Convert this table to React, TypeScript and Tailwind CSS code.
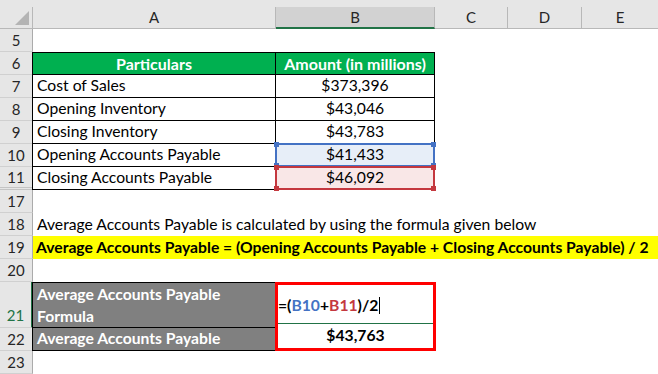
import React from "react";

const font = { fontFamily: "Lato, 'Open Sans', 'Liberation Sans', sans-serif" };

const rows = [
  { n: 7, label: "Cost of Sales", value: "$373,396" },
  { n: 8, label: "Opening Inventory", value: "$43,046" },
  { n: 9, label: "Closing Inventory", value: "$43,783" },
  { n: 10, label: "Opening Accounts Payable", value: "$41,433", mark: "blue" },
  { n: 11, label: "Closing Accounts Payable", value: "$46,092", mark: "red" },
];

function RowHead({ n, dark, double }: { n: number; dark?: boolean; double?: boolean }) {
  return (
    <div
      className={`w-[33px] shrink-0 bg-[#e6e6e6] border-r ${dark ? "border-r-black" : "border-r-[#ababab]"} ${
        double ? "border-b-[3px] border-b-[#c4c4c4] border-double" : "border-b border-b-[#d0d0d0]"
      } flex items-center justify-center text-[15px] text-[#262626]`}
    >
      {n}
    </div>
  );
}

function Corner({ color }: { color: string }) {
  return (
    <>
      <span className={`absolute left-[-3px] top-[-3px] w-[5px] h-[5px] ${color}`} />
      <span className={`absolute right-[-3px] top-[-3px] w-[5px] h-[5px] ${color}`} />
      <span className={`absolute left-[-3px] bottom-[-3px] w-[5px] h-[5px] ${color}`} />
      <span className={`absolute right-[-3px] bottom-[-3px] w-[5px] h-[5px] ${color}`} />
    </>
  );
}

export default function App() {
  return (
    <div className="w-[658px] h-[374px] overflow-hidden bg-white text-[15.7px] text-black" style={font}>
      {/* column headers */}
      <div className="h-[29px] bg-[#e6e6e6] flex flex-col">
        <div className="h-[7px]" />
        <div className="flex h-[22px] text-[15px] text-[#262626]">
          <div className="w-[33px] shrink-0 border-r border-b border-[#b8b8b8] flex items-end justify-end pr-[3px] pb-[3px]">
            <svg width="14" height="14" viewBox="0 0 14 14">
              <polygon points="0,14 14,14 14,0" fill="#b4b4b4" />
            </svg>
          </div>
          <div className="w-[243px] border-r border-b border-[#b8b8b8] flex items-center justify-center">A</div>
          <div className="w-[159px] bg-[#d2d2d2] border-r border-r-[#b8b8b8] border-b-2 border-b-[#217346] flex items-center justify-center">B</div>
          <div className="w-[73px] border-r border-b border-[#b8b8b8] flex items-center justify-center">C</div>
          <div className="w-[74px] border-r border-b border-[#b8b8b8] flex items-center justify-center">D</div>
          <div className="flex-1 border-b border-[#b8b8b8] flex items-center justify-center">E</div>
        </div>
      </div>

      {/* row 5 */}
      <div className="flex h-[23px]">
        <RowHead n={5} />
      </div>

      {/* row 6 header */}
      <div className="flex h-[23px]">
        <RowHead n={6} dark />
        <div className="-ml-px w-[244px] bg-[#00b050] border border-black flex items-center justify-center font-bold text-[16px] text-white">
          Particulars
        </div>
        <div className="w-[159px] bg-[#00b050] border-y border-r border-black flex items-center justify-center font-bold text-[16px] text-white">
          Amount (in millions)
        </div>
      </div>

      {rows.map((r) => (
        <div key={r.n} className="flex h-[23px]">
          <RowHead n={r.n} dark double={r.n === 11} />
          <div className="-ml-px w-[244px] border-x border-b border-black flex items-center pl-[4px]">{r.label}</div>
          <div className="relative w-[159px] border-r border-b border-black flex items-center justify-center">
            {r.mark === "blue" && (
              <div className="absolute left-[-1px] right-[-1px] top-[-1px] bottom-[-1px] border-2 border-[#4472c4] bg-[#e7eef8]">
                <Corner color="bg-[#4472c4]" />
              </div>
            )}
            {r.mark === "red" && (
              <div className="absolute left-[-1px] right-[-1px] top-[-1px] bottom-[-1px] border-2 border-[#c4383f] bg-[#f9e7e7]">
                <Corner color="bg-[#c4383f]" />
              </div>
            )}
            <span className="relative">{r.value}</span>
          </div>
        </div>
      ))}

      {/* row 17 */}
      <div className="flex h-[23px]">
        <RowHead n={17} />
      </div>

      {/* row 18 */}
      <div className="flex h-[23px]">
        <RowHead n={18} />
        <div className="flex items-center pl-[4px] whitespace-nowrap">
          Average Accounts Payable is calculated by using the formula given below
        </div>
      </div>

      {/* row 19 */}
      <div className="flex h-[23px]">
        <RowHead n={19} />
        <div className="flex-1 bg-[#ffff00] flex items-center pl-[3px] whitespace-nowrap font-bold">
          Average Accounts Payable = (Opening Accounts Payable + Closing Accounts Payable) / 2
        </div>
      </div>

      {/* row 20 */}
      <div className="flex h-[23px]">
        <RowHead n={20} />
      </div>

      {/* rows 21-22 */}
      <div className="flex h-[69px]">
        <div className="flex flex-col text-[15px]">
          <div className="w-[33px] h-[46px] bg-[#e6e6e6] border-r-2 border-r-[#217346] border-b border-b-[#d0d0d0] flex items-end justify-center text-[#217346]">
            <span className="h-[23px] leading-[23px]">21</span>
          </div>
          <div className="w-[33px] h-[23px] bg-[#e6e6e6] border-r border-r-black border-b border-b-[#d0d0d0] flex items-center justify-center text-[#262626]">
            22
          </div>
        </div>
        <div className="flex flex-col -ml-px">
          <div className="w-[244px] h-[46px] bg-[#808080] border border-black flex flex-col justify-end pl-[4px] font-bold text-white leading-[22px]">
            <span>Average Accounts Payable</span>
            <span>Formula</span>
          </div>
          <div className="w-[244px] h-[23px] bg-[#808080] border-x border-b border-black flex items-center pl-[4px] font-bold text-white">
            Average Accounts Payable
          </div>
        </div>
        <div className="-ml-px w-[161px] h-[69px] border-[3px] border-[#ff0000] flex flex-col">
          <div className="h-[44px] flex items-center font-bold pt-[3px]">
            <span>=(</span>
            <span className="text-[#4472c4]">B10</span>
            <span>+</span>
            <span className="text-[#c4383f]">B11</span>
            <span>)/2</span>
            <span className="ml-[1px] w-px h-[17px] bg-black" />
          </div>
          <div className="h-[2px] bg-[#217346]" />
          <div className="flex-1 flex items-center justify-center font-bold">$43,763</div>
        </div>
      </div>

      {/* row 23 */}
      <div className="flex h-[23px]">
        <RowHead n={23} />
      </div>
    </div>
  );
}
